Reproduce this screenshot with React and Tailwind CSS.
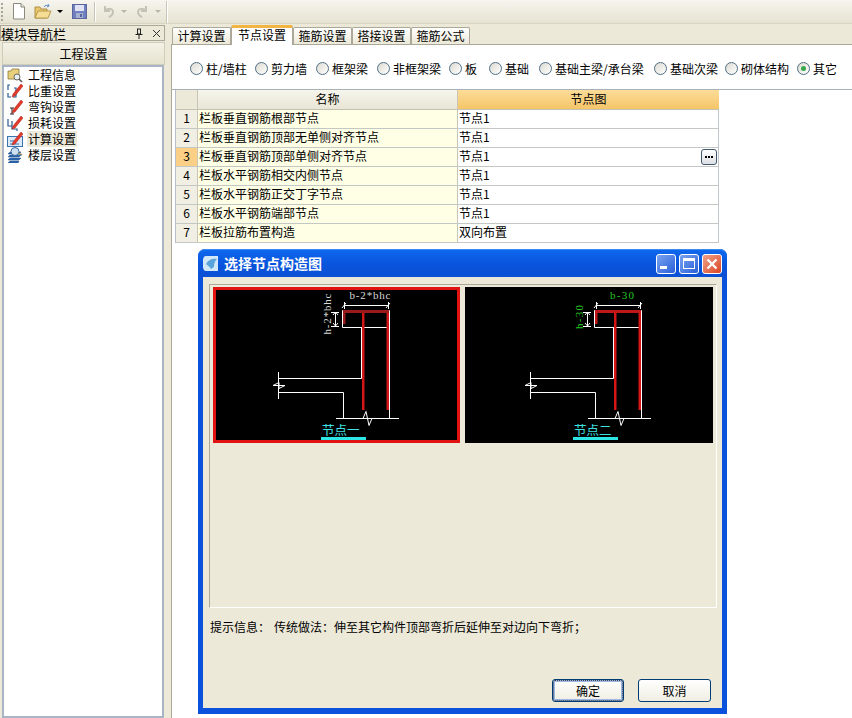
import React from 'react'

const radios = [
  ['柱/墙柱', 'w-[65px]'],
  ['剪力墙', 'w-[61px]'],
  ['框架梁', 'w-[61px]'],
  ['非框架梁', 'w-[72px]'],
  ['板', 'w-[40px]'],
  ['基础', 'w-[50px]'],
  ['基础主梁/承台梁', 'w-[115px]'],
  ['基础次梁', 'w-[71px]'],
  ['砌体结构', 'w-[72px]'],
  ['其它', 'w-[40px]', true],
]

const rows = [
  ['栏板垂直钢筋根部节点', '节点1'],
  ['栏板垂直钢筋顶部无单侧对齐节点', '节点1'],
  ['栏板垂直钢筋顶部单侧对齐节点', '节点1', true],
  ['栏板水平钢筋相交内侧节点', '节点1'],
  ['栏板水平钢筋正交丁字节点', '节点1'],
  ['栏板水平钢筋端部节点', '节点1'],
  ['栏板拉筋布置构造', '双向布置'],
]

function Doc() {
  return (
    <svg width="14" height="17" viewBox="0 0 14 17">
      <path d="M1.500 .5h7.500l3.500 3.500v12h-11z" fill="#fff" stroke="#8a8a7c" />
      <path d="M9 .5v3.500h3.500" fill="#e8e6da" stroke="#8a8a7c" />
    </svg>
  )
}

function Folder() {
  return (
    <svg width="18" height="16" viewBox="0 0 18 16">
      <path d="M1 3h5l1 2h6v9H1z" fill="#e9c66c" stroke="#b08f45" />
      <path d="M1 14l3-7h13l-3 7z" fill="#f6dd96" stroke="#b89848" />
      <path d="M10 3c1-2 3-2 5-1l-1-2M15 2l-2 1" fill="none" stroke="#5a8ac8" />
    </svg>
  )
}

function Save() {
  return (
    <svg width="15" height="15" viewBox="0 0 15 15">
      <rect x=".5" y=".5" width="14" height="14" fill="#6f7fc0" stroke="#59659c" />
      <rect x="3" y="1" width="9" height="6" fill="#dfe3f2" />
      <rect x="4" y="9" width="7" height="5" fill="#a8b0d0" />
      <rect x="8" y="10" width="2" height="3" fill="#59659c" />
    </svg>
  )
}

function Caret({ muted }) {
  return <span className={`w-0 h-0 border-x-[3px] border-x-transparent border-t-[3px] ${muted ? 'border-t-[#b8b6a8]' : 'border-t-black'}`} />
}

function Arrow({ flip }) {
  return (
    <svg width="13" height="13" viewBox="0 0 13 13" className={flip ? '-scale-x-100' : ''}>
      <path d="M3 1v5h5M3 6c2-3 8-3 8 1 0 2-2 4-4 5" fill="none" stroke="#c4c2b6" strokeWidth="2" />
    </svg>
  )
}

function Toolbar() {
  return (
    <div className="h-[24px] shrink-0 flex items-center bg-gradient-to-b from-[#f6f5ee] to-[#e6e3d2] border-b border-[#d8d5c4]">
      <div className="w-[3px] h-[18px] ml-[1px] border-l-2 border-dotted border-[#a8a698]" />
      <div className="ml-[8px] flex"><Doc /></div>
      <div className="ml-[8px] flex"><Folder /></div>
      <div className="ml-[5px] flex"><Caret /></div>
      <div className="ml-[9px] flex"><Save /></div>
      <div className="ml-[7px] w-[2px] h-[20px] border-l border-r border-l-[#c8c5b4] border-r-white" />
      <div className="ml-[6px] flex"><Arrow /></div>
      <div className="ml-[6px] flex"><Caret muted /></div>
      <div className="ml-[9px] flex"><Arrow flip /></div>
      <div className="ml-[6px] flex"><Caret muted /></div>
      <div className="ml-[5px] w-[2px] h-[22px] border-l border-r border-l-[#c8c5b4] border-r-white" />
    </div>
  )
}

function Pencil() {
  return <path d="M6 11l8-10 2 2-8 10-3 1z" fill="#e23b2e" stroke="#a82018" strokeWidth=".5" />
}

function NavIcon({ type }) {
  return (
    <svg width="16" height="16" viewBox="0 0 16 16" className="shrink-0">
      {type === 'info' && (
        <>
          <path d="M1 4h3l1-2h7v10H1z" fill="#e8cf7c" stroke="#8c7a3a" strokeWidth=".8" />
          <circle cx="10" cy="10" r="3" fill="#e8eef6" stroke="#6a6a60" />
          <path d="M12 12l3 3" stroke="#555" strokeWidth="1.500" />
        </>
      )}
      {type === 'density' && (
        <>
          <path d="M3 2H1v5M1 10v4h3M7 5h2v9H6" fill="none" stroke="#2a5a90" strokeWidth="1.200" />
          <Pencil />
        </>
      )}
      {type === 'hook' && (
        <>
          <path d="M5 9v6M3 9h4M3 15h4" fill="none" stroke="#222" />
          <Pencil />
        </>
      )}
      {type === 'loss' && (
        <>
          <path d="M1 4v7h4V6M5 11v3h5v2" fill="none" stroke="#2a5a90" strokeWidth="1.200" />
          <Pencil />
        </>
      )}
      {type === 'calc' && (
        <>
          <rect x=".5" y="5.500" width="15" height="10" fill="#dbe8f6" stroke="#3a74b0" />
          <path d="M3 10h4M3 13h9" stroke="#3a74b0" />
          <Pencil />
        </>
      )}
      {type === 'floor' && (
        <>
          <path d="M3 5h11l-2 2H1zM3 8h11l-2 2H1zM3 11h11l-2 2H1zM3 14h9l-1 2H1z" fill="#2c6ab0" stroke="#1c4a88" strokeWidth=".5" />
          <circle cx="8" cy="4.500" r="4" fill="#cfe0f2" stroke="#3a6a9c" />
          <path d="M11 6l4 2" stroke="#8a8a6a" strokeWidth="1.500" />
        </>
      )}
    </svg>
  )
}

function NavPanel() {
  const items = [
    ['工程信息', 'info'],
    ['比重设置', 'density'],
    ['弯钩设置', 'hook'],
    ['损耗设置', 'loss'],
    ['计算设置', 'calc', true],
    ['楼层设置', 'floor'],
  ]
  return (
    <div className="w-[165px] shrink-0 flex flex-col">
      <div className="h-[16px] mt-[1px] flex items-center border border-[#aca899] bg-[#ece9d8] text-[13px] leading-none">
        <span className="flex-1">模块导航栏</span>
        <svg width="10" height="11" viewBox="0 0 10 11" className="mr-[8px]">
          <path d="M3 1h4M3.500 1v5h3V1M1.500 6.500h7M5 7v4" fill="none" stroke="#222" />
        </svg>
        <svg width="9" height="9" viewBox="0 0 9 9" className="mr-[3px]">
          <path d="M1 1l7 7M8 1L1 8" stroke="#333" />
        </svg>
      </div>
      <div className="ml-[2px] mt-[1px] h-[23px] flex items-center justify-center bg-gradient-to-b from-[#f4f2e6] to-[#e6e3d0] border border-[#cfccba] text-[12px]">工程设置</div>
      <div className="ml-[2px] mr-[1px] flex-1 bg-white border-2 border-[#a9b4c4] pl-[3px]">
        {items.map(([label, type, active]) => (
          <div key={label} className="h-[16px] flex items-center gap-[4px] text-[12px] leading-none">
            <NavIcon type={type} />
            <span className={`px-[1px] h-[16px] flex items-center ${active ? 'bg-[#ece9d8]' : ''}`}>{label}</span>
          </div>
        ))}
      </div>
    </div>
  )
}

function Tabs() {
  const tabs = ['计算设置', '节点设置', '箍筋设置', '搭接设置', '箍筋公式']
  return (
    <div className="h-[19px] mt-[1px] flex items-end pl-[1px] text-[12px] leading-none">
      {tabs.map((t, i) =>
        i === 1 ? (
          <div key={t} className="w-[62px] h-[20px] -mb-[1px] pb-[3px] flex items-center justify-center bg-white border-x border-[#aca899] border-t-[3px] border-t-[#f2b544] rounded-t-[2px] relative">{t}</div>
        ) : (
          <div key={t} className="w-[59px] h-[17px] flex items-center justify-center bg-gradient-to-b from-white to-[#ece9d8] border border-b-0 border-[#aca899] rounded-t-[2px]">{t}</div>
        )
      )}
    </div>
  )
}

function Radio({ on }) {
  return (
    <span className="w-[13px] h-[13px] shrink-0 rounded-full border border-[#4f6f88] bg-gradient-to-br from-[#dcdad0] to-white flex items-center justify-center">
      {on && <span className="w-[5px] h-[5px] rounded-full bg-[#35a84a]" />}
    </span>
  )
}

function NodeTable() {
  return (
    <div className="ml-[3px] w-[544px] text-[12px] leading-none border-l border-[#b8bfc8]">
      <div className="h-[20px] flex border-b border-[#c4c2b2]">
        <div className="w-[22px] bg-[#ece9d8] border-r border-[#c8c6b6]" />
        <div className="w-[260px] pb-[2px] bg-gradient-to-b from-[#f6f5ec] to-[#e9e6d6] border-r border-[#c8c6b6] flex items-center justify-center">名称</div>
        <div className="w-[261px] pb-[2px] bg-gradient-to-b from-[#fcdc98] to-[#f5c568] flex items-center justify-center">节点图</div>
      </div>
      {rows.map(([name, val, current], i) => (
        <div key={name} className="h-[19px] flex border-b border-[#c4c8c4]">
          <div className={`w-[22px] pb-[2px] flex items-center justify-center border-r border-[#c8c6b6] ${current ? 'bg-[#fbcf85]' : 'bg-[#f1efe4]'}`}>{i + 1}</div>
          <div className="w-[260px] pl-[1px] pb-[2px] bg-[#ffffe6] border-r border-[#c8c6b6] flex items-center">{name}</div>
          <div className="w-[261px] pl-[1px] pr-[1px] bg-white border-r border-[#c0c6cc] flex items-center justify-between">
            <span className="-mt-[2px]">{val}</span>
            {current && (
              <span className="w-[16px] h-[16px] rounded-[3px] border border-[#44586c] bg-gradient-to-b from-white to-[#dde0e4] flex items-center justify-center gap-[1px]">
                <span className="w-[2px] h-[2px] bg-black" />
                <span className="w-[2px] h-[2px] bg-black" />
                <span className="w-[2px] h-[2px] bg-black" />
              </span>
            )}
          </div>
        </div>
      ))}
    </div>
  )
}

function Diagram({ selected, topText, sideText, dimColor, label, sideY }) {
  return (
    <div className={`h-[156px] bg-black relative ${selected ? 'w-[247px] outline-[3px] -outline-offset-[3px] outline-[#e01212]' : 'w-[248px]'}`}>
      <svg width="100%" height="100%" viewBox={selected ? '0 0 247 156' : '0 0 248 156'} className="block">
        <text x="157" y="12" textAnchor="middle" fill={dimColor} fontSize="11" fontFamily="'Liberation Serif', serif" textLength={selected ? 41 : 24}>{topText}</text>
        <text x="0" y="0" transform={`translate(118 ${sideY}) rotate(-90)`} textAnchor="middle" fill={dimColor} fontSize="11" fontFamily="'Liberation Serif', serif" textLength={selected ? 41 : 24}>{sideText}</text>
        <g fill="none" stroke="#fff" strokeWidth="1">
          <path d="M129.500 23.500H176.500V40.500H129.500Z" />
          <path d="M148.500 40V91.500H65.500M65.500 105.500H130.500V131M176.500 40V131" />
          <path d="M123 131.500H186" />
          <path d="M65.500 85V112" />
          <path d="M60 98.500l6-3 0 3h6l-6 3 0-3z" />
          <path d="M150 131.500l3-7 3 14 3-7" />
          <path d="M131 18.500H175M131.500 15v7M175.500 15v7M129 21l4-5M173 21l4-5" />
          <path d="M122.500 25V39M118 25.500h8M118 39.500h8M120 28l2.500-3 2.500 3M120 36l2.500 3 2.500-3" />
        </g>
        <g fill={selected ? '#9c1a1a' : '#c01818'}>
          <rect x="130" y="23" width="46" height="3" />
          <rect x="130" y="23" width="2.500" height="14" />
        </g>
        <g fill="#d41616">
          <rect x="149" y="26" width="2.500" height="97" />
          <rect x="173.500" y="26" width="2.500" height="97" />
        </g>
        <text x="109" y="148" fill="#3ee0e0" fontSize="12.500" fontFamily="'Noto Sans CJK SC', sans-serif">{label}</text>
        <rect x="108" y="150" width="45" height="3" fill="#2ee6e6" />
      </svg>
    </div>
  )
}

function TitleButton({ kind }) {
  const bg = kind === 'close' ? 'from-[#f0a088] to-[#d8431e]' : 'from-[#7aa2f0] to-[#2a5fd8]'
  return (
    <span className={`w-[20px] h-[20px] rounded-[3px] border border-white bg-gradient-to-br ${bg} flex items-center justify-center`}>
      {kind === 'min' && <span className="w-[7px] h-[3px] bg-white mt-[8px] -ml-[5px]" />}
      {kind === 'max' && <span className="w-[12px] h-[11px] border border-white border-t-[3px]" />}
      {kind === 'close' && (
        <svg width="12" height="12" viewBox="0 0 12 12">
          <path d="M1.500 1.500l9 9M10.500 1.500l-9 9" stroke="#fff" strokeWidth="2.200" />
        </svg>
      )}
    </span>
  )
}

function Dialog() {
  return (
    <div className="absolute left-[198px] top-[249px] w-[529px] h-[465px] flex flex-col rounded-t-[7px] bg-[#0a52dc] px-[5px] pb-[6px] text-[12px] leading-none">
      <div className="h-[28px] -mx-[5px] px-[5px] shrink-0 flex items-center rounded-t-[7px] bg-gradient-to-b from-[#0f68ee] via-[#0a55dd] to-[#0a50d4] border-t border-[#3c8cf0]">
        <svg width="17" height="17" viewBox="0 0 17 17" className="shrink-0">
          <path d="M3 1h12v15H3C1 16 0 14 0 12V5c0-2 1-4 3-4z" fill="#d2e8f8" />
          <path d="M3 9c2-4 6-6 11-5-2 2-3 4-3 8l-3 2c-1-2-3-3-5-5z" fill="#5aa4dc" />
        </svg>
        <span className="ml-[4px] pb-[2px] flex-1 text-white font-bold text-[14px]">选择节点构造图</span>
        <div className="flex gap-[3px]">
          <TitleButton kind="min" />
          <TitleButton kind="max" />
          <TitleButton kind="close" />
        </div>
      </div>
      <div className="flex-1 flex flex-col bg-[#ece9d8] px-[6px] pt-[7px] pb-[6px]">
        <div className="h-[324px] w-[508px] flex gap-[5px] pl-[3px] pt-[2px] border border-t-[#aca899] border-l-[#aca899] border-r-white border-b-white">
          <Diagram selected topText="b-2*bhc" sideText="h-2*bhc" sideY="27" dimColor="#d8d8d8" label="节点一" />
          <Diagram topText="b-30" sideText="h-30" sideY="30" dimColor="#22c822" label="节点二" />
        </div>
        <div className="mt-[11px] h-[16px] pl-[1px] flex items-center">
          <span className="w-[64px]">提示信息：</span>
          <span>传统做法：伸至其它构件顶部弯折后延伸至对边向下弯折；</span>
        </div>
        <div className="mt-auto flex justify-end gap-[14px] pr-[5px]">
          <button className="w-[72px] h-[23px] rounded-[3px] border border-[#003c74] bg-gradient-to-b from-white to-[#f0eee2] shadow-[inset_0_0_0_2px_#9db8e0] outline-1 outline-dotted -outline-offset-2 outline-[#445] text-black">确定</button>
          <button className="w-[73px] h-[23px] rounded-[3px] border border-[#003c74] bg-gradient-to-b from-white to-[#f0eee2] text-black">取消</button>
        </div>
      </div>
    </div>
  )
}

export default function App() {
  return (
    <div className="relative w-[852px] h-[718px] overflow-hidden flex flex-col bg-[#ece9d8] text-black font-['Noto_Sans_CJK_SC',sans-serif]">
      <Toolbar />
      <div className="flex-1 min-h-0 flex">
        <NavPanel />
        <div className="ml-[6px] flex-1 min-w-0 flex flex-col">
          <Tabs />
          <div className="flex-1 bg-white border-l border-t border-[#aca899]">
            <div className="h-[45px] pl-[18px] pt-[3px] flex items-center border-b border-[#a8b0b8] text-[12px] leading-none">
              {radios.map(([label, width, on]) => (
                <div key={label} className={`${width} shrink-0 flex items-center gap-[3px]`}>
                  <Radio on={on} />
                  <span className="whitespace-nowrap">{label}</span>
                </div>
              ))}
            </div>
            <NodeTable />
          </div>
        </div>
      </div>
      <Dialog />
    </div>
  )
}
